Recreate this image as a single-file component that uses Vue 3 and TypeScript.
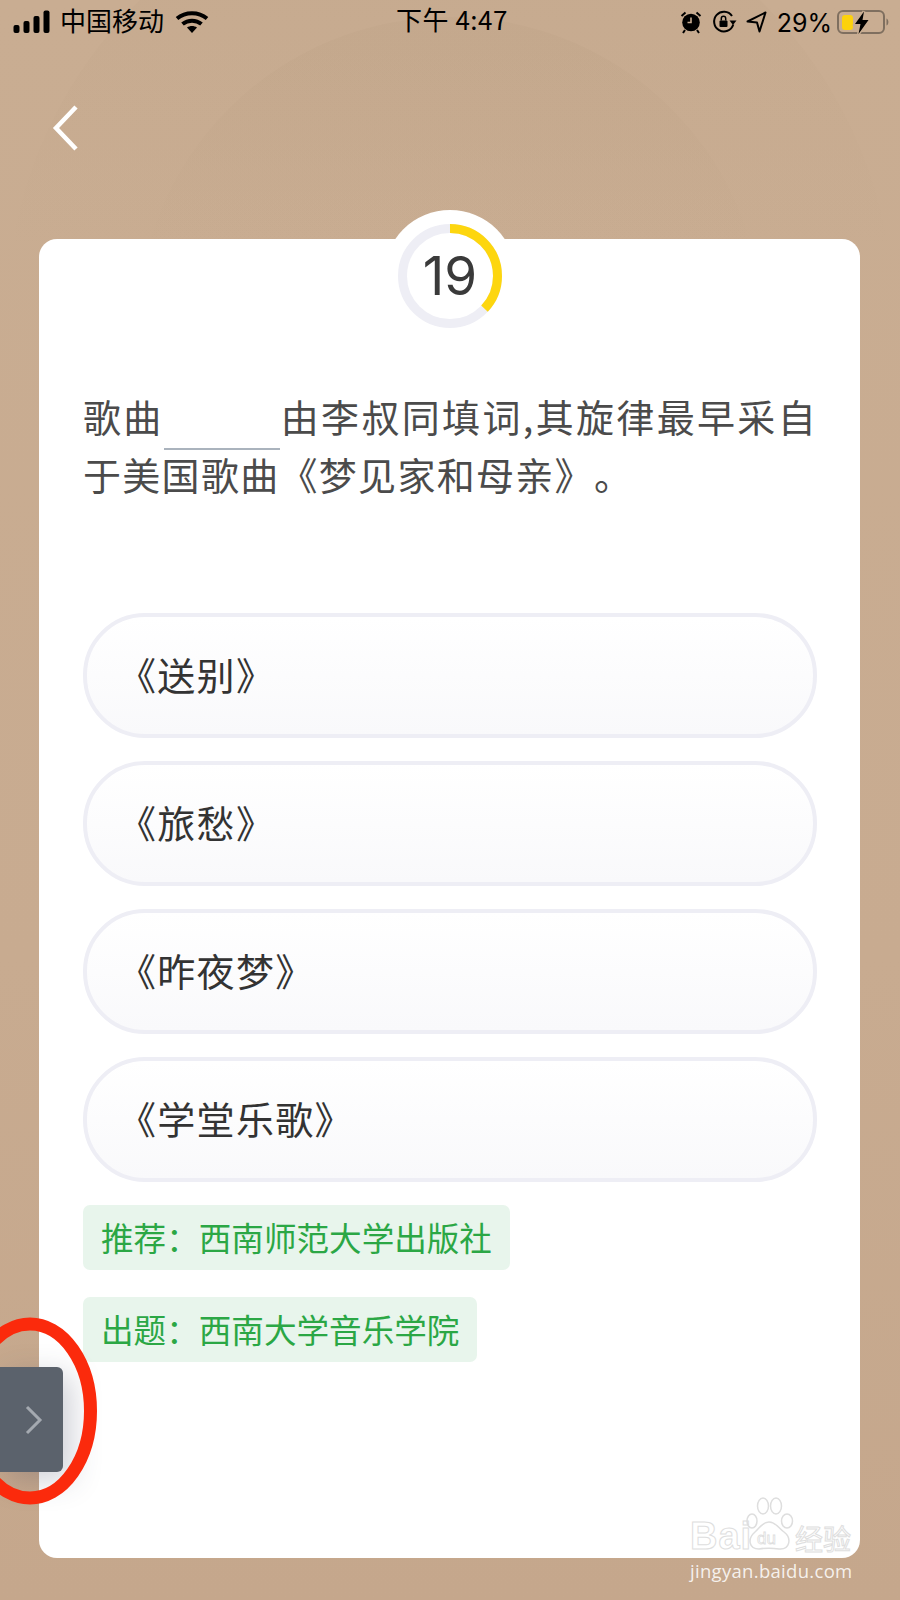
<script setup lang="ts">
const options: string[] = ['《送别》', '《旅愁》', '《昨夜梦》', '《学堂乐歌》']
const tags: string[] = ['推荐\uFF1A西南师范大学出版社', '出题\uFF1A西南大学音乐学院']
const radius = 47.5
const circumference = 2 * Math.PI * radius
const progress = 0.37
const dash = `${circumference * progress} ${circumference}`
</script>

<template>
  <div class="page">
    <div class="halo halo-outer"></div>
    <div class="halo halo-inner"></div>

    <header class="status">
      <div class="status-left">
        <svg class="signal" width="38" height="24" viewBox="0 0 38 24" fill="#000">
          <rect x="0.5" y="15" width="6" height="8" rx="2" />
          <rect x="10.5" y="11" width="6" height="12" rx="2" />
          <rect x="20.5" y="6" width="6" height="17" rx="2" />
          <rect x="30.5" y="0.5" width="6" height="22.5" rx="2" />
        </svg>
        <span class="carrier">中国移动</span>
        <svg class="wifi" width="34" height="24" viewBox="0 0 34 24" fill="none" stroke="#000" stroke-width="4">
          <path d="M2 8.5C10.5 1.5 23.5 1.5 32 8.5" />
          <path d="M7.5 14C13 9.5 21 9.5 26.500 14" />
          <path d="M12 17.500L17 23L22 17.500C19 15.500 15 15.500 12 17.500Z" fill="#000" stroke="none" />
        </svg>
      </div>
      <div class="clock">下午 4:47</div>
      <div class="status-right">
        <svg width="24" height="24" viewBox="0 0 24 24">
          <circle cx="12" cy="12.500" r="8.800" fill="#000" />
          <path d="M2.500 6L6.500 2.500M21.500 6L17.500 2.500M6 20L4 23M18 20L20 23" stroke="#000" stroke-width="2" />
          <path d="M12 7.500V12.500H8.500" stroke="#c9ad92" stroke-width="1.600" fill="none" />
        </svg>
        <svg width="25" height="24" viewBox="0 0 25 24" fill="none">
          <path d="M21.300 14.500A9.800 9.800 0 1 1 20 6" stroke="#000" stroke-width="2" />
          <path d="M24.500 10.500H17.500L21 15Z" fill="#000" />
          <rect x="7.500" y="10.500" width="8" height="6.500" rx="1" fill="#000" />
          <path d="M9.300 10.500V8.500A2.200 2.200 0 0 1 13.700 8.500V10.500" stroke="#000" stroke-width="1.500" />
        </svg>
        <svg width="21" height="22" viewBox="0 0 21 22" fill="none">
          <path d="M1.500 10.500L19.500 1.500L13.500 20.500L11 11.500Z" stroke="#000" stroke-width="2" stroke-linejoin="round" />
        </svg>
        <span class="battery-text">29%</span>
        <svg class="battery" width="54" height="26" viewBox="0 0 54 26">
          <rect x="1" y="2" width="46" height="22" rx="5" fill="none" stroke="#7f6f5f" stroke-width="2" />
          <rect x="5" y="6" width="11" height="15" rx="3" fill="#fdd20c" />
          <path d="M49.500 9.500C52 10.500 52 15.500 49.500 16.500Z" fill="#7f6f5f" />
          <path d="M18 15L27 2.500L25.500 11H31.500L21.500 25L23.500 15Z" fill="#c9ad92" stroke="#c9ad92" stroke-width="3" />
          <path d="M18 15L27 2.500L25.500 11H31.500L21.500 25L23.500 15Z" fill="#000" />
        </svg>
      </div>
    </header>

    <nav class="nav">
      <svg width="28" height="48" viewBox="0 0 28 48" fill="none">
        <path d="M25 3L5 24L25 45" stroke="#fff" stroke-width="4.500" />
      </svg>
    </nav>

    <main class="card">
      <div class="timer">
        <svg width="106" height="106" viewBox="0 0 106 106" fill="none">
          <circle cx="53" cy="53" :r="radius" stroke="#eeeef5" stroke-width="9" />
          <circle
            cx="53"
            cy="53"
            :r="radius"
            stroke="#fdd60f"
            stroke-width="9"
            :stroke-dasharray="dash"
            transform="rotate(-90 53 53)"
          />
        </svg>
        <span class="timer-num">19</span>
      </div>

      <div class="question">
        <p class="q-line q-first">歌曲<span class="blank"></span>由李叔同填词,其旋律最早采自</p>
        <p class="q-line">于美国歌曲《梦见家和母亲》。</p>
      </div>

      <ul class="options">
        <li v-for="option in options" :key="option" class="option">{{ option }}</li>
      </ul>

      <div class="tags">
        <span v-for="tag in tags" :key="tag" class="tag">{{ tag }}</span>
      </div>
    </main>

    <button class="side-tab" type="button" aria-label="展开">
      <svg width="20" height="30" viewBox="0 0 20 30" fill="none">
        <path d="M3 2L16 15L3 28" stroke="#a4a9b0" stroke-width="3" />
      </svg>
    </button>

    <svg class="marker" width="110" height="200" viewBox="0 0 110 200" fill="none">
      <ellipse cx="30" cy="100" rx="60.500" ry="87" stroke="#fb2a0c" stroke-width="13" />
    </svg>

    <div class="watermark">
      <div class="wm-logo">
        <span class="wm-bai">Bai</span>
        <svg class="wm-paw" width="48" height="58" viewBox="0 0 48 58" fill="none" stroke="#dedede" stroke-width="1.500">
          <ellipse cx="6" cy="24" rx="5" ry="7" />
          <ellipse cx="17" cy="9" rx="5.500" ry="8" />
          <ellipse cx="30" cy="9" rx="5.500" ry="8" />
          <ellipse cx="41" cy="24" rx="5.500" ry="7" />
          <path d="M23 25C30 25 32 31 38 35C46 41 44 53 33 52C27 51 19 51 13 52C3 52 1 42 9 35C14 31 16 25 23 25Z" />
          <text x="11" y="47" class="wm-du">du</text>
        </svg>
        <span class="wm-cn">经验</span>
      </div>
      <div class="wm-url">jingyan.baidu.com</div>
    </div>
  </div>
</template>

<style>
html,
body {
  margin: 0;
  padding: 0;
}
</style>

<style scoped>
.page {
  position: relative;
  width: 900px;
  height: 1600px;
  overflow: hidden;
  background: linear-gradient(180deg, #c9ad92 0%, #c8ab90 60%, #c5a78c 100%);
  font-family: "Noto Sans CJK SC", "Noto Sans", sans-serif;
}
.halo {
  position: absolute;
  border-radius: 50%;
}
.halo-outer {
  left: 6px;
  top: -126px;
  width: 888px;
  height: 888px;
  background: linear-gradient(180deg, rgba(185, 158, 130, 0.14) 15%, rgba(185, 158, 130, 0) 42%);
}
.halo-inner {
  left: 137px;
  top: 17px;
  width: 626px;
  height: 626px;
  background: linear-gradient(180deg, rgba(185, 158, 130, 0.2) 5%, rgba(185, 158, 130, 0) 37%);
}
.status {
  position: relative;
  display: grid;
  grid-template-columns: 1fr auto 1fr;
  align-items: center;
  height: 44px;
  padding: 0 9px 0 13px;
  color: #000;
  font-size: 26px;
}
.status-left,
.status-right {
  display: flex;
  align-items: center;
}
.status-left {
  gap: 9px;
}
.carrier {
  width: 106px;
  margin-bottom: 6px;
}
.status-right {
  justify-content: flex-end;
  gap: 9px;
}
.clock {
  margin-bottom: 7px;
  font-size: 26px;
  letter-spacing: 0.500px;
}
.battery-text {
  font-family: "Inter", sans-serif;
  font-size: 25px;
  margin: 1px 0 0 1px;
}
.battery {
  margin-left: -4px;
}
.nav {
  position: relative;
  display: flex;
  align-items: center;
  height: 195px;
  box-sizing: border-box;
  padding: 0 0 28px 51px;
}
.card {
  position: relative;
  width: 821px;
  height: 1319px;
  margin-left: 39px;
  box-sizing: border-box;
  padding: 148px 43px 0 44px;
  background: #fff;
  border-radius: 18px;
}
.timer {
  position: absolute;
  top: -29px;
  left: 345px;
  display: flex;
  align-items: center;
  justify-content: center;
  width: 132px;
  height: 132px;
  background: #fff;
  border-radius: 50%;
}
.timer svg {
  display: block;
}
.timer-num {
  position: absolute;
  inset: 0;
  display: flex;
  align-items: center;
  justify-content: center;
  font-family: "Inter", "Roboto", sans-serif;
  font-weight: 400;
  font-size: 53px;
  color: #3a3a3a;
}
.question {
  font-size: 38px;
  line-height: 58px;
  letter-spacing: 1.300px;
  text-spacing-trim: space-all;
  color: #4b4b4b;
}
.q-line {
  margin: 0;
  height: 58px;
  white-space: nowrap;
}
.q-first {
  white-space: normal;
  text-align: justify;
  text-align-last: justify;
}
.blank {
  display: inline-block;
  box-sizing: border-box;
  width: 116px;
  height: 63px;
  margin: 0 0 -5px 0;
  vertical-align: top;
  border-bottom: 2px solid #aab3bd;
}
.options {
  display: flex;
  flex-direction: column;
  gap: 23px;
  margin: 110px 0 0;
  padding: 0;
  list-style: none;
}
.option {
  display: flex;
  align-items: center;
  height: 125px;
  box-sizing: border-box;
  padding: 0 0 4px 31px;
  border: 4px solid #eeeef5;
  border-radius: 62px;
  background: linear-gradient(180deg, #fff 0%, #f9f9fb 100%);
  font-size: 38px;
  letter-spacing: 1.300px;
  color: #333;
}
.tags {
  display: flex;
  flex-direction: column;
  align-items: flex-start;
  gap: 27px;
  margin-top: 23px;
}
.tag {
  display: flex;
  align-items: center;
  height: 65px;
  box-sizing: border-box;
  padding: 0 18px 3px;
  background: #e8f5ec;
  border-radius: 7px;
  font-size: 32.600px;
  color: #2ba745;
}
.side-tab {
  position: absolute;
  left: 0;
  top: 1367px;
  display: flex;
  align-items: center;
  justify-content: flex-end;
  width: 63px;
  height: 105px;
  padding: 0 19px 0 0;
  border: 0;
  border-radius: 0 6px 6px 0;
  background: #5b626c;
  box-shadow: 8px 8px 30px rgba(60, 65, 90, 0.25);
}
.marker {
  position: absolute;
  left: 0;
  top: 1311px;
}
.watermark {
  position: absolute;
  left: 690px;
  top: 1502px;
  width: 170px;
}
.wm-logo {
  display: flex;
  align-items: flex-end;
  height: 53px;
}
.wm-bai {
  width: 60px;
  font-family: "Liberation Sans", sans-serif;
  font-weight: 700;
  font-size: 38px;
  line-height: 38px;
  color: transparent;
  -webkit-text-stroke: 1px #dedede;
  letter-spacing: 1px;
}
.wm-paw {
  flex: none;
  margin-left: -4px;
}
.wm-du {
  font-family: "Liberation Sans", sans-serif;
  font-size: 17px;
  fill: none;
  stroke: #dedede;
  stroke-width: 0.8;
}
.wm-cn {
  font-size: 28px;
  line-height: 34px;
  color: transparent;
  -webkit-text-stroke: 1px #dedede;
  margin-left: 1px;
}
.wm-url {
  margin-top: 3px;
  font-family: "Open Sans", sans-serif;
  font-size: 18.500px;
  letter-spacing: 0.300px;
  color: rgba(255, 255, 255, 0.85);
  white-space: nowrap;
}
</style>
